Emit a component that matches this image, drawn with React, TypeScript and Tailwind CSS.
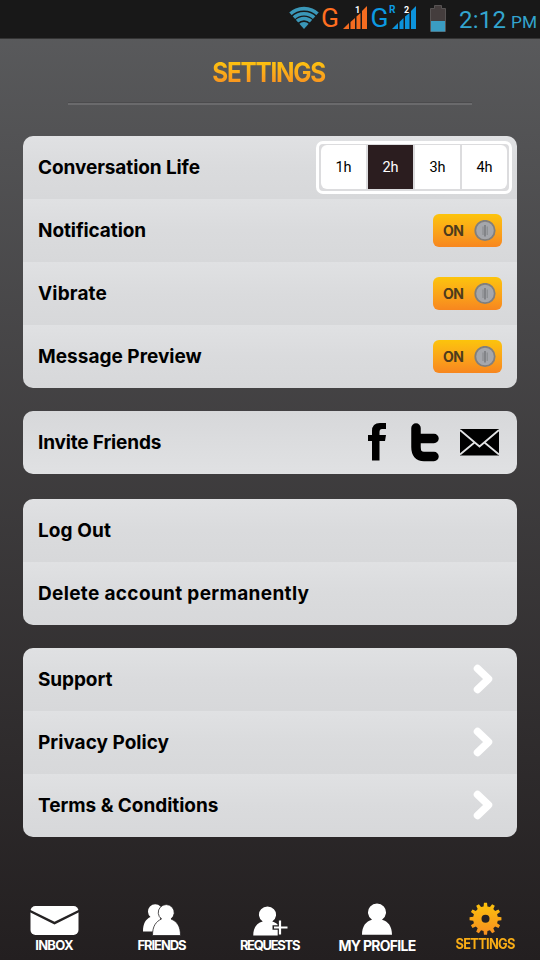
import type { ReactNode } from "react";

function StatusBar() {
  return (
    <div className="relative h-[39px] w-full border-b border-[#343434] bg-[#181818]">
      <svg className="block h-[38px] w-[540px]" viewBox="0 0 540 38">
        <clipPath id="fan">
          <path d="M304 29 L288 11 Q304 0 320 11 Z" />
        </clipPath>
        <g clipPath="url(#fan)">
          <circle cx="304" cy="29" r="7" fill="#3a97b8" />
          <g fill="none" stroke="#3a97b8" strokeWidth="3.6">
            <circle cx="304" cy="29" r="10.5" />
            <circle cx="304" cy="29" r="15.3" />
            <circle cx="304" cy="29" r="20.4" />
          </g>
        </g>
        <g fontFamily="Roboto, sans-serif">
          <text x="321" y="27" fontSize="26" fill="#ff6f20" textLength="18" lengthAdjust="spacingAndGlyphs">G</text>
          <text x="370.500" y="27" fontSize="26" fill="#0c9ae2" textLength="18" lengthAdjust="spacingAndGlyphs">G</text>
          <text x="389" y="13" fontSize="10.500" fontWeight="700" fill="#0c9ae2" textLength="6.500" lengthAdjust="spacingAndGlyphs">R</text>
        </g>
        <g fill="#f56c20">
          <path d="M343 29 L349 23 V29Z" />
          <path d="M350.500 22 L355 18 V29 H350.500Z" />
          <path d="M356.500 16.500 L360.500 13 V29 H356.500Z" />
          <path d="M362 11 L367 6 V29 H362Z" />
        </g>
        <g fill="#0c93dc">
          <path d="M392 29 L398 23 V29Z" />
          <path d="M399.500 22 L403.500 18 V29 H399.500Z" />
          <path d="M405 16.500 L409.500 13 V29 H405Z" />
          <path d="M411 11 L416 6 V29 H411Z" />
        </g>
        <g fontFamily="Roboto, sans-serif" fontSize="9" fontWeight="700" fill="#fff">
          <text x="355" y="13">1</text>
          <text x="404" y="13">2</text>
        </g>
        <path d="M430.500 8.500 H434.500 V5.500 H441.500 V8.500 H445.500 V31.500 H430.500Z" fill="#443d3d" stroke="#575353" />
        <rect x="431" y="21" width="14" height="10.500" fill="#3a9cc2" />
        <g fontFamily="Roboto, sans-serif" fill="#33a5cf">
          <text x="459" y="28" fontSize="24" textLength="47" lengthAdjust="spacing">2:12</text>
          <text x="511" y="28" fontSize="16" textLength="26" lengthAdjust="spacingAndGlyphs">PM</text>
        </g>
      </svg>
    </div>
  );
}

function Card({ children, className = "" }: { children: ReactNode; className?: string }) {
  return <section className={"overflow-hidden rounded-[10px] " + className}>{children}</section>;
}

const rowShade = "bg-linear-to-b from-[#e0e1e3] via-[#dadbdd] to-[#d7d8da]";

function Row({ label, tracking, shade = rowShade, children }: { label: string; tracking: string; shade?: string; children?: ReactNode }) {
  return (
    <div className={"flex h-[63px] items-center justify-between pl-[15px] " + shade}>
      <span className={"whitespace-nowrap text-[19px] font-bold leading-6 text-black " + tracking}>{label}</span>
      {children}
    </div>
  );
}

function Toggle() {
  return (
    <div className="mr-[15px] flex h-[33px] w-[69px] items-center justify-between rounded-md bg-linear-to-b from-[#fcc40b] to-[#f7861f] pl-[10px] pr-[6px]">
      <span className="text-[14px] font-bold tracking-[-0.5px] text-[#4d3b1d]">ON</span>
      <svg className="size-[22px]" viewBox="0 0 22 22">
        <circle cx="11" cy="10.500" r="9.700" fill="#a5a7ac" stroke="#817f7d" strokeWidth="1.800" />
        <path d="M9 6.500V15M13.200 6.500V15" stroke="#85878a" strokeWidth="1" />
        <path d="M11 5V16.500" stroke="#77797d" strokeWidth="1.500" />
      </svg>
    </div>
  );
}

function LifePicker() {
  return (
    <div className="mr-[5px] mt-[-1px] h-[53px] w-[196px] rounded-[7px] border-[3px] border-white bg-[#dcdcde] px-[2px] pb-[2px] pt-px">
      <div className="grid h-full grid-cols-4 gap-[2px] overflow-hidden rounded-[6px] font-[Roboto,sans-serif] text-[14.500px] text-black">
        {["1h", "2h", "3h", "4h"].map((life) => (
          <div key={life} className={"flex items-center justify-center pt-[3px] " + (life === "2h" ? "bg-[#2b1d1f] text-white" : "bg-white")}>
            {life}
          </div>
        ))}
      </div>
    </div>
  );
}

function Chevron() {
  return (
    <svg className="mr-[22px] mt-[-2px] h-[32px] w-[24px]" viewBox="0 0 24 32">
      <path d="M6.500 5.500 L17.500 16 L6.500 26.500" fill="none" stroke="white" strokeWidth="7.500" strokeLinecap="round" strokeLinejoin="round" />
    </svg>
  );
}

function ShareIcons() {
  return (
    <svg className="mr-[17px] mt-[-2px] h-[40px] w-[134px]" viewBox="366 422 134 40">
      <path d="M372 460.500V441H368V435H372V431Q372 423 380 423H386V429H382Q379.500 429 379.500 432V435H386L385 441H379.500V460.500Z" />
      <path d="M416 428V447Q416 456.500 424 456.500H434M416 438.500H434" fill="none" stroke="black" strokeWidth="9.500" strokeLinecap="round" />
      <rect x="460" y="429" width="39" height="26.500" />
      <path d="M460 430 L479.500 446.500 L499 430M460 454.500 L474.500 442.500M499 454.500 L484.500 442.500" fill="none" stroke="#e1e2e4" strokeWidth="1.800" />
    </svg>
  );
}

const person = "M-15 33 C-15 24 -11 19 -5 17.500 A9 9 0 1 1 5 17.500 C11 19 15 24 15 33Z";

function TabIcon({ name }: { name: string }) {
  if (name === "INBOX")
    return (
      <g>
        <rect x="30.500" y="906" width="48" height="29" rx="5" fill="white" />
        <path d="M29 910.500 L54.500 923 L80 910.500" fill="none" stroke="#252223" strokeWidth="2.500" />
      </g>
    );
  if (name === "FRIENDS")
    return (
      <g fill="white">
        <path d="M143 931.500C143 923 146 919 150.500 917A7.300 7.300 0 1 1 160 917L163 931.500Z" />
        <path d="M152.500 935.500C152.500 926 156 921.500 161.500 919A8 8 0 1 1 171 919C177 921.500 180.500 926 180.500 935.500Z" stroke="#252223" strokeWidth="0.800" />
      </g>
    );
  if (name === "REQUESTS")
    return (
      <g>
        <path d={person} transform="translate(267.500 905.500) scale(.95 .91)" fill="white" />
        <path d="M280 919V936M272.500 927.500H289" stroke="#252223" strokeWidth="4.600" />
        <path d="M280 920.500V934.500M274 927.500H287.500" stroke="white" strokeWidth="2.200" />
      </g>
    );
  if (name === "MY PROFILE") return <path d={person} transform="translate(377 902.500) scale(1 .98)" fill="white" />;
  return (
    <g>
      <linearGradient id="gold" x1="0" y1="0" x2="0" y2="1">
        <stop offset="0" stopColor="#fcc30c" />
        <stop offset="1" stopColor="#f78e20" />
      </linearGradient>
      <path
        fill="url(#gold)"
        fillRule="evenodd"
        d={
          Array.from({ length: 12 }, (_, i) => {
            const at = (r: number, degrees: number) => {
              const a = ((i * 30 + degrees) * Math.PI) / 180;
              return `${485.5 + r * Math.sin(a)} ${918.7 - r * Math.cos(a)}`;
            };
            return `${i ? "L" : "M"}${at(12.4, -9)}L${at(16, -5.5)}L${at(16, 5.5)}L${at(12.4, 9)}`;
          }).join("") + "ZM489.500 918.700A4 4 0 1 0 481.500 918.700A4 4 0 1 0 489.500 918.700Z"
        }
      />
    </g>
  );
}

const tabs = [
  { name: "INBOX", box: "0 900 108 38", text: "text-[13px] tracking-[-0.7px] text-white mt-[-1px]" },
  { name: "FRIENDS", box: "108 900 108 38", text: "text-[13px] tracking-[-1.1px] text-white mt-[-1px] mr-px" },
  { name: "REQUESTS", box: "216 900 108 38", text: "text-[13px] tracking-[-1.3px] text-white mt-[-1px] mr-px" },
  { name: "MY PROFILE", box: "324 900 108 38", text: "text-[14px] tracking-[-0.7px] text-white mr-[2px]" },
  { name: "SETTINGS", box: "432 900 108 38", text: "text-[14px] tracking-[-0.8px] scale-x-[.92] text-[#f9ad16] mt-[-2px] mr-[2px]" },
];

export default function App() {
  return (
    <main className="flex h-[960px] w-[540px] flex-col overflow-hidden bg-linear-to-b from-[#5b5c5e] to-[#231f20] font-[Inter,sans-serif]">
      <StatusBar />
      <header className="flex h-[97px] flex-col items-center">
        <h1 className="mt-[17px] scale-x-[.9] bg-linear-to-b from-[#fdc010] from-20% to-[#f79020] to-85% bg-clip-text pr-[2px] text-[27px] font-bold leading-[34px] tracking-[-1.400px] text-transparent">SETTINGS</h1>
        <div className="mt-[12px] h-[3px] w-[404px] border-t border-[#4b4b4d] bg-[#6a6a6c]" />
      </header>
      <div className="mx-[23px] flex flex-1 flex-col">
        <Card>
          <Row label="Conversation Life" tracking="tracking-[-0.09px]"><LifePicker /></Row>
          <Row label="Notification" tracking="tracking-[-0.09px]"><Toggle /></Row>
          <Row label="Vibrate" tracking="tracking-[0.15px]"><Toggle /></Row>
          <Row label="Message Preview" tracking="tracking-[0.02px]"><Toggle /></Row>
        </Card>
        <Card className="mt-[23px]">
          <Row label="Invite Friends" tracking="tracking-[-0.17px]" shade="bg-linear-to-b from-[#d7d8da] to-[#e0e1e3]"><ShareIcons /></Row>
        </Card>
        <Card className="mt-[25px]">
          <Row label="Log Out" tracking="tracking-[0.1px]" />
          <Row label="Delete account permanently" tracking="tracking-[0.34px]" />
        </Card>
        <Card className="mt-[23px]">
          <Row label="Support" tracking="tracking-[-0.1px]"><Chevron /></Row>
          <Row label="Privacy Policy" tracking="tracking-[0.02px]"><Chevron /></Row>
          <Row label="Terms & Conditions" tracking="tracking-[-0.04px]"><Chevron /></Row>
        </Card>
      </div>
      <nav className="grid h-[60px] grid-cols-5">
        {tabs.map((tab) => (
          <div key={tab.name} className="flex flex-col items-center">
            <svg className="h-[38px] w-[108px] shrink-0" viewBox={tab.box}><TabIcon name={tab.name} /></svg>
            <span className={"whitespace-nowrap font-bold leading-4 " + tab.text}>{tab.name}</span>
          </div>
        ))}
      </nav>
    </main>
  );
}
